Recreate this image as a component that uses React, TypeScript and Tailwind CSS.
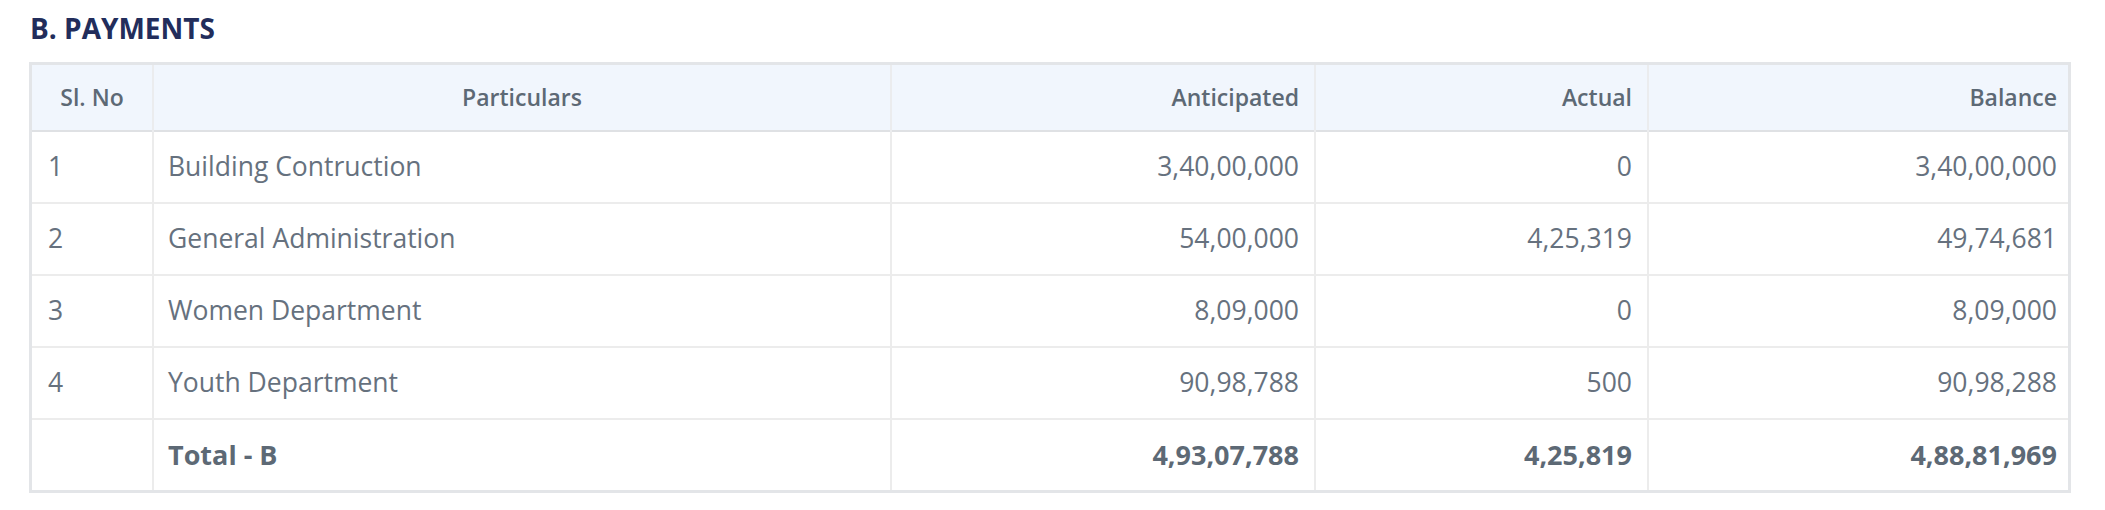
import React from 'react';

const rows = [
  { no: '1', name: 'Building Contruction', anticipated: '3,40,00,000', actual: '0', balance: '3,40,00,000' },
  { no: '2', name: 'General Administration', anticipated: '54,00,000', actual: '4,25,319', balance: '49,74,681' },
  { no: '3', name: 'Women Department', anticipated: '8,09,000', actual: '0', balance: '8,09,000' },
  { no: '4', name: 'Youth Department', anticipated: '90,98,788', actual: '500', balance: '90,98,288' },
];

const total = { anticipated: '4,93,07,788', actual: '4,25,819', balance: '4,88,81,969' };

const App = () => {
  return (
    <div className="min-h-screen bg-white pl-[29px] pr-[34px] pt-[8px] font-['Open_Sans',_'Noto_Sans',_sans-serif]">
      <h2 className="text-[28px] leading-[40px] font-bold text-[#222d5b] pl-[1px]">B. PAYMENTS</h2>

      <div className="mt-[14px] border-[3px] border-[#e3e5e8]">
        <table className="w-full border-collapse table-fixed">
          <colgroup>
            <col className="w-[121px]" />
            <col className="w-[738px]" />
            <col className="w-[424px]" />
            <col className="w-[333px]" />
            <col />
          </colgroup>
          <thead>
            <tr className="bg-[#f1f6fd] h-[66px] text-[23px] font-semibold text-[#5d6975] border-b-2 border-[#dfe1e4]">
              <th className="text-center font-semibold px-4">Sl. No</th>
              <th className="text-center font-semibold px-4 border-l-2 border-[#ebecee]">Particulars</th>
              <th className="text-right font-semibold pr-[15px] border-l-2 border-[#ebecee]">Anticipated</th>
              <th className="text-right font-semibold pr-[15px] border-l-2 border-[#ebecee]">Actual</th>
              <th className="text-right font-semibold pr-[11px] border-l-2 border-[#ebecee]">Balance</th>
            </tr>
          </thead>
          <tbody className="text-[26.5px] text-[#66717e]">
            {rows.map((r) => (
              <tr key={r.no} className="h-[72px] border-b-2 border-[#ececec]">
                <td className="pl-[16px]">{r.no}</td>
                <td className="pl-[14px] border-l-2 border-[#ececec]">{r.name}</td>
                <td className="text-right pr-[15px] border-l-2 border-[#ececec]">{r.anticipated}</td>
                <td className="text-right pr-[15px] border-l-2 border-[#ececec]">{r.actual}</td>
                <td className="text-right pr-[11px] border-l-2 border-[#ececec]">{r.balance}</td>
              </tr>
            ))}
            <tr className="h-[71px] font-bold text-[#5d6975]">
              <td className="pl-[16px]"></td>
              <td className="pl-[14px] border-l-2 border-[#ececec] text-[27px]">Total - B</td>
              <td className="text-right pr-[15px] border-l-2 border-[#ececec] text-[27px]">{total.anticipated}</td>
              <td className="text-right pr-[15px] border-l-2 border-[#ececec] text-[27px]">{total.actual}</td>
              <td className="text-right pr-[11px] border-l-2 border-[#ececec] text-[27px]">{total.balance}</td>
            </tr>
          </tbody>
        </table>
      </div>
    </div>
  );
};

export default App;
